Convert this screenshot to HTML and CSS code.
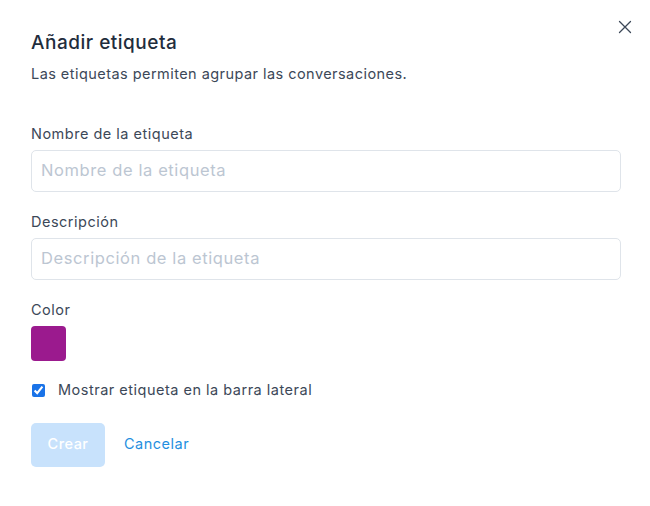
FILE: index.html
```html
<!DOCTYPE html>
<html lang="es">
<head>
<meta charset="utf-8">
<link rel="stylesheet" href="styles.css">
</head>
<body>
<div class="modal">
  <button class="close" aria-label="Cerrar">
    <svg width="14" height="14" viewBox="0 0 14 14"><path d="M1.5 1.5 L12.5 12.5 M12.5 1.5 L1.5 12.5" stroke="#3c4858" stroke-width="1.3" fill="none" stroke-linecap="round"/></svg>
  </button>
  <h1 class="title">Añadir etiqueta</h1>
  <p class="subtitle">Las etiquetas permiten agrupar las conversaciones.</p>
  <form class="form">
    <label class="field">
      <span class="label">Nombre de la etiqueta</span>
      <input class="input" type="text" placeholder="Nombre de la etiqueta">
    </label>
    <label class="field">
      <span class="label">Descripción</span>
      <input class="input" type="text" placeholder="Descripción de la etiqueta">
    </label>
    <div class="field">
      <span class="label">Color</span>
      <span class="swatch"></span>
    </div>
    <label class="check">
      <input type="checkbox" checked>
      <span>Mostrar etiqueta en la barra lateral</span>
    </label>
    <div class="actions">
      <button type="button" class="btn-primary">Crear</button>
      <button type="button" class="btn-link">Cancelar</button>
    </div>
  </form>
</div>
</body>
</html>
```
FILE: styles.css
```css
html, body {
  margin: 0;
  padding: 0;
  background: #fff;
}
body {
  font-family: Inter, "Noto Sans", sans-serif;
  color: #3c4858;
  letter-spacing: 0.5px;
}
.modal {
  position: relative;
  width: 650px;
  height: 506px;
  box-sizing: border-box;
  padding: 31px 29px 0 31px;
}
.close {
  position: absolute;
  top: 20px;
  left: 618px;
  width: 14px;
  height: 14px;
  padding: 0;
  border: 0;
  background: none;
  display: flex;
}
.title {
  margin: 0;
  font-size: 19px;
  line-height: 24px;
  font-weight: 500;
  color: #1f2d3d;
  letter-spacing: 0.5px;
}
.subtitle {
  margin: 9px 0 0;
  font-size: 14.5px;
  line-height: 20px;
  color: #3c4858;
  letter-spacing: 0.45px;
}
.form {
  display: flex;
  flex-direction: column;
  margin-top: 40px;
}
.field {
  display: flex;
  flex-direction: column;
  gap: 6px;
  margin-bottom: 20px;
}
.label {
  font-size: 14.5px;
  line-height: 20px;
  color: #3c4858;
}
.input {
  box-sizing: border-box;
  width: 590px;
  height: 42px;
  border: 1px solid #dfe4ea;
  border-radius: 5px;
  padding: 0 9px 2px;
  font-family: inherit;
  font-size: 16.5px;
  letter-spacing: 0.6px;
  color: #1f2d3d;
  outline: none;
}
.input::placeholder {
  color: #bcc6d2;
}
.swatch {
  width: 35px;
  height: 35px;
  border-radius: 4px;
  background: #9b1a8e;
}
.check {
  display: flex;
  align-items: center;
  gap: 13px;
  font-size: 14.5px;
  line-height: 20px;
  color: #3c4858;
  margin-top: -1px;
}
.check input {
  margin: 0 0 0 1px;
  width: 13px;
  height: 13px;
  accent-color: #1a73e8;
}
.actions {
  display: flex;
  align-items: center;
  gap: 19px;
  margin-top: 23px;
}
.btn-primary {
  width: 74px;
  height: 44px;
  border: 0;
  border-radius: 5px;
  background: #c8e2fc;
  color: #fff;
  font-family: inherit;
  font-size: 14.5px;
  font-weight: 500;
  letter-spacing: 0.5px;
  padding: 0 0 4px;
}
.btn-link {
  border: 0;
  background: none;
  padding: 0 0 4px;
  color: #1f8fe0;
  font-family: inherit;
  font-size: 14.5px;
  letter-spacing: 0.5px;
}
```
